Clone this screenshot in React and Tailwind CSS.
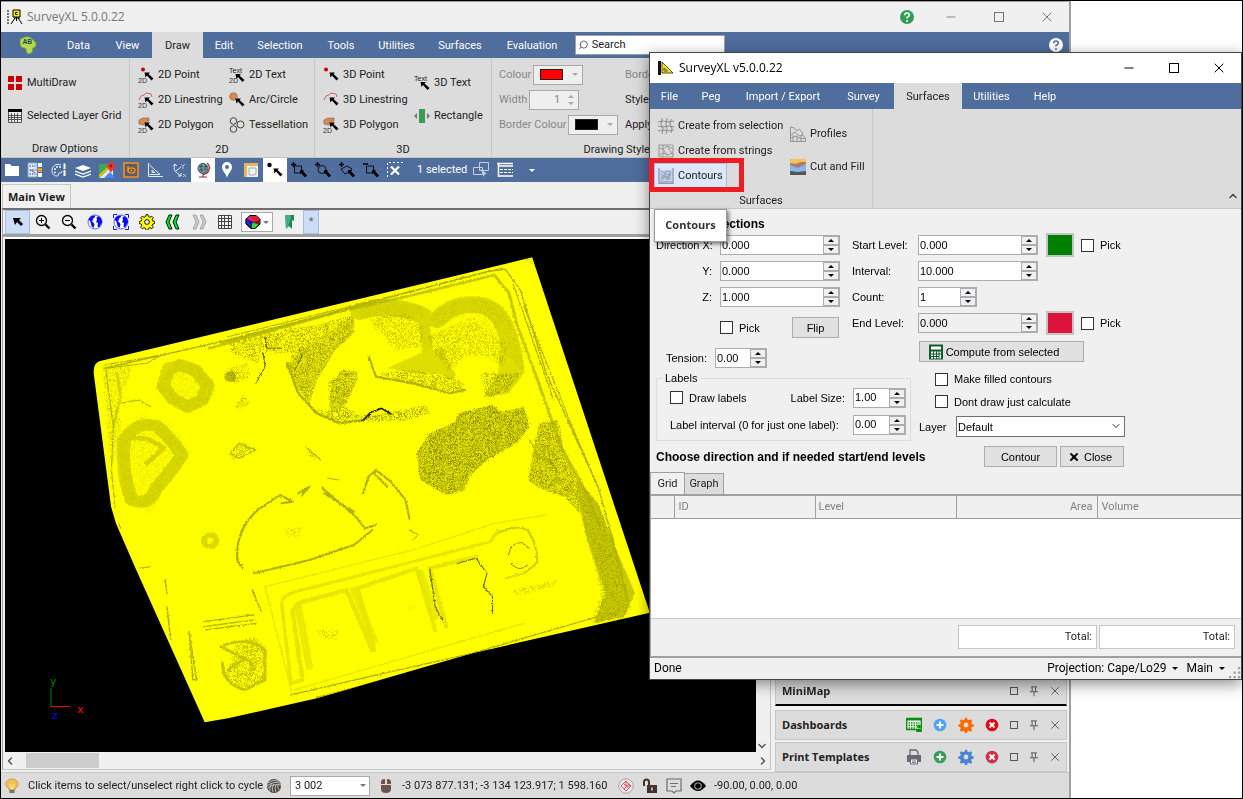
import React, { useState } from "react";
import clsx from "clsx";
import { Minus, X, Search, ChevronUp, ChevronDown } from "lucide-react";

const Icon = ({ children, className = "size-4" }) => (
  <svg viewBox="0 0 16 16" className={clsx("shrink-0", className)} fill="none">
    {children}
  </svg>
);

const Cursor = ({ x = 0, y = 0 }) => (
  <path
    transform={`translate(${x} ${y})`}
    d="M0 0h5.500l-1.500 1.500 5 4.500-2 2-4.500-5-1.500 2z"
    fill="#000"
  />
);

const Caret = ({ className = "text-[#777]" }) => (
  <svg viewBox="0 0 6 3" className={clsx("h-[3px] w-[6px] shrink-0", className)}>
    <path d="M0 0h6L3 3z" fill="currentColor" />
  </svg>
);

const Tag = ({ children, y = 15.5 }) => (
  <text x="0" y={y} fontSize="7" fill="#333" fontFamily="Liberation Sans, sans-serif">
    {children}
  </text>
);

/* ---------- ribbon icons ---------- */

const MultiDrawIcon = () => (
  <Icon>
    <path d="M1 1h6v6H1zM9 1h6v6H9zM1 9h6v6H1zM9 9h6v6H9z" fill="#cc0000" />
  </Icon>
);

const LayerGridIcon = () => (
  <Icon>
    <path d="M1 2h14v12.500H1z" fill="#eee" />
    <path d="M1.500 3v11.500h13V3M1 7.500h14M1 9.500h14M1 11.500h14M4.500 5v9M7.500 5v9M10.500 5v9" stroke="#333" strokeWidth=".8" />
    <path d="M1 1h14v3H1z" fill="#000" />
  </Icon>
);

const PointIcon = ({ flat }) => (
  <Icon>
    <circle cx={flat ? 5 : 3} cy="2.500" r="2" fill="#c40000" />
    {flat && <Tag>2D</Tag>}
    <Cursor x={6.5} y={5.500} />
  </Icon>
);

const LineIcon = ({ flat }) => (
  <Icon>
    <path d="M1 8l2-4 3-1 2-2 5 1 1 3" stroke="#c86464" />
    {flat && <Tag>2D</Tag>}
    <Cursor x={6.5} y={5.500} />
  </Icon>
);

const PolygonIcon = () => (
  <Icon>
    <path d="M1 3l4-2 6 0v3l-3 1-2 3-5-1z" fill="#d58a58" stroke="#8a5a38" strokeWidth=".6" />
    <Tag>2D</Tag>
    <Cursor x={6.5} y={5.500} />
  </Icon>
);

const TextIcon = ({ flat }) => (
  <Icon>
    <text x="0" y="5.500" fontSize="7" fill="#222" fontFamily="Liberation Sans, sans-serif">
      Text
    </text>
    {flat && <Tag>2D</Tag>}
    <Cursor x={6.5} y={7} />
  </Icon>
);

const CircleIcon = () => (
  <Icon>
    <circle cx="4.500" cy="4.500" r="3.800" fill="#d58a58" stroke="#a0683f" strokeWidth=".7" />
    <Cursor x={6.5} y={6.500} />
  </Icon>
);

const TessellationIcon = () => (
  <Icon>
    <g stroke="#444">
      <circle cx="4.500" cy="4" r="3.300" />
      <circle cx="11.500" cy="7.500" r="3.500" />
      <circle cx="4.500" cy="12" r="3.300" />
    </g>
  </Icon>
);

const RectangleIcon = () => (
  <Icon>
    <path d="M5 1h6v14H5z" fill="#3a9a58" />
    <path d="M3 5v6L0 8zM13 5v6l3-3z" fill="#777" />
  </Icon>
);

const MeshIcon = () => (
  <Icon>
    <path
      d="M0 4l5-1 5 1 6-1M0 8l5 1 6-1 5 1M0 13l6-1 4 1 6-1M4 0L3 6l2 5-1 5M9 0l-1 6 1 5-1 5M13 1l-1 5 2 5-1 4"
      stroke="#8c8c8c"
    />
  </Icon>
);

const StringsIcon = () => (
  <Icon>
    <path
      d="M1 2h14v12H1zM1 5l4 1 4-3 6 3M1 12l4-2 4 2 6-2M5 2v12M5 6l4 6M9 3l6 9"
      stroke="#999"
    />
  </Icon>
);

const ContoursIcon = () => (
  <Icon>
    <path d="M1 0v14h14V0" stroke="#8fa3c4" strokeWidth="1.500" />
    <path d="M2 2h12v11H2z" fill="#c3d0e6" />
    <path
      d="M3 3l3 2 3-2 4 1M3 6l3 2 2-2 5 2M3 9l3 1 3-2 4 3M4 12l3-4 3 4 2-8M3 12l5-8M8 12l5-7"
      stroke="#8696b5"
      strokeWidth=".8"
    />
    <path d="M0 15.500h16" stroke="#999" />
  </Icon>
);

const ProfilesIcon = () => (
  <Icon>
    <path d="M.5 15.500V1l4 1 2 3 3-2 3 4v2l3 3v3.500zM1 9l4-3 4 4 4-1M1 12l5-2 5 3 4-1M3 9v6M7 10v5M11 10v5" stroke="#949494" />
  </Icon>
);

const CutFillIcon = () => (
  <Icon>
    <path d="M0 0h16v16H0z" fill="#86b6ee" />
    <path d="M0 0h16v3L8 5 0 4z" fill="#f6c356" />
    <path d="M0 4l5 1 6-2 5 0v2L8 9 0 6z" fill="#b07c68" />
    <path d="M0 12l8 1 8-1v4H0z" fill="#555" />
  </Icon>
);

/* ---------- quick bar icons ---------- */

const FolderIcon = () => (
  <Icon>
    <path d="M1 2h5l1.500 2H15v10H1z" fill="#fff" />
  </Icon>
);

const CabinetIcon = () => (
  <Icon>
    <path d="M1 1h9v14H1z" fill="#dcebfa" stroke="#8aa" />
    <path d="M2.500 4h6M2.500 8h6M2.500 12h6" stroke="#4c7ac4" strokeWidth="1.500" strokeDasharray="1.500 1" />
    <path d="M11 1h4v4h-4zM11 11h4v4h-4z" fill="#f4f4f4" />
    <path d="M11 6h4v4h-4z" fill="#e9973c" />
    <path d="M4 8l4 3" stroke="#c33" />
  </Icon>
);

const PaletteIcon = () => (
  <Icon>
    <path d="M10 3C5 1 1 4 1 8.500S4 14 6 14s1-2 2-3 3 1 3-2" stroke="#fff" strokeWidth=".9" />
    <g fill="#fff">
      <circle cx="4" cy="7" r=".9" />
      <circle cx="6" cy="5" r=".9" />
      <circle cx="9" cy="5" r=".9" />
      <circle cx="4" cy="10.500" r=".9" />
      <path d="M13 1l1.500 1v5h-2V2zM12.500 8h2v6h-2z" />
    </g>
  </Icon>
);

const LayersIcon = () => (
  <Icon>
    <path d="M0 6l8-3 8 3-8 3z" fill="#fff" />
    <path d="M0 9l8 3 8-3M0 12l8 3 8-3" stroke="#fff" strokeWidth="1.300" />
  </Icon>
);

const MapsIcon = () => (
  <Icon>
    <path d="M0 2h14v14H0z" fill="#3aa757" />
    <path d="M0 16L14 3v13z" fill="#e8e8e8" />
    <path d="M5 16l6-6 5 6z" fill="#4285f4" />
    <path d="M0 14L11 4" stroke="#fbbc04" strokeWidth="2" />
    <path d="M12 0a4 4 0 0 0-4 4c0 3 3 4 4 7 1-3 4-4 4-7a4 4 0 0 0-4-4z" fill="#e53935" />
    <circle cx="12" cy="4" r="1.400" fill="#8a1b14" />
  </Icon>
);

const EyeTileIcon = () => (
  <Icon>
    <path d="M1 1h14v14H1z" fill="#5a5b66" stroke="#f79219" strokeWidth="1.600" />
    <path d="M5 4v6" stroke="#f79219" strokeWidth="1.500" />
    <ellipse cx="8.500" cy="8.500" rx="3.500" ry="2.600" stroke="#f79219" strokeWidth="1.300" />
    <circle cx="8.500" cy="8.500" r="1" fill="#f79219" />
  </Icon>
);

const SetSquareIcon = () => (
  <Icon>
    <path d="M1.500 1v13.500H16M2.500 3L13 12.500H2.500M5 8v2.500h3z" stroke="#e6ecf6" />
  </Icon>
);

const AxesIcon = () => (
  <Icon>
    <path d="M4 3Q2 8 5 10l5 4M5 9l5-4M2 4l2-2 2 2M7 14h3v-3" stroke="#e6ecf6" />
    <path d="M10 2l2 2 2-2M12 4v3M12 12l3 3M15 12l-3 3" stroke="#cfd9ea" strokeWidth=".8" />
  </Icon>
);

const GlobeStandIcon = () => (
  <Icon>
    <circle cx="8" cy="6.500" r="5" fill="#5b8fb5" stroke="#444" />
    <path d="M4 5l3-2 2 1 1 3-3 3-2-3zM10 3l2 1v3l-2 1z" fill="#33503f" />
    <path d="M3 6h10M8 2v9" stroke="#bcd4e6" strokeWidth=".6" />
    <path d="M12 1C16 4 15 12 8 12.500M8 12.500V15M4 15h8" stroke="#8f2f2f" strokeWidth="1.200" />
  </Icon>
);

const MarkerIcon = () => (
  <Icon>
    <path
      fillRule="evenodd"
      d="M8 0a5 5 0 0 0-5 5c0 4 4 6 5 11 1-5 5-7 5-11a5 5 0 0 0-5-5zm0 3a2 2 0 1 0 0 4 2 2 0 0 0 0-4z"
      fill="#fff"
    />
  </Icon>
);

const PlanIcon = () => (
  <Icon>
    <path d="M1 1h14v14H1z" fill="#f2f2f2" />
    <path d="M1 1h14v3H4v11H1z" fill="#e8b55d" />
    <path d="M6 6h7v6l-2 1H6z" stroke="#999" strokeWidth=".8" />
  </Icon>
);

const PointSelectIcon = () => (
  <Icon>
    <circle cx="2.500" cy="3" r="2.200" fill="#000" />
    <Cursor x={6.5} y={6.500} />
  </Icon>
);

const ShapeSelectIcon = ({ d, minus }) => (
  <Icon>
    <path d={d} stroke="#111" />
    <path d={minus ? "M0 2h5" : "M0 2.500h5M2.500 0v5"} stroke="#000" strokeWidth="1.400" />
    <path d="M9 8h4l-1 1 4 4.500-2 2L10 11l-1 1z" fill="#000" />
  </Icon>
);

const DeselectIcon = () => (
  <Icon>
    <path d="M.5 1v14M2 .5h14" stroke="#fff" strokeDasharray="2 2" />
    <path d="M4 4.500l8 8M12 4.500l-8 8" stroke="#fff" strokeWidth="2.200" />
  </Icon>
);

const CopyShapeIcon = () => (
  <Icon>
    <path d="M.5 5.500h9v7h-9zM6.500 .5h9v8h-9z" stroke="#c3cde0" />
    <path d="M8 7l6 5-2.500.5-1 2.500z" fill="#c3cde0" />
  </Icon>
);

const ListIcon = () => (
  <Icon>
    <path d="M0 1.500h16M1.500 1v14M1 4h15M1 14h15" stroke="#fff" strokeWidth="1.500" />
    <path d="M3 7.500h13M3 10.500h13" stroke="#fff" strokeDasharray="3 1" />
  </Icon>
);

const quickTools = [
  { name: "Cabinet", icon: <CabinetIcon /> },
  { name: "Palette", icon: <PaletteIcon /> },
  { name: "Layers", icon: <LayersIcon /> },
  { name: "Maps", icon: <MapsIcon /> },
  { name: "Imagery", icon: <EyeTileIcon /> },
  { name: "Set square", icon: <SetSquareIcon /> },
  { name: "Axes", icon: <AxesIcon /> },
  { name: "Globe", icon: <GlobeStandIcon />, on: true },
  { name: "Marker", icon: <MarkerIcon /> },
  { name: "Plan", icon: <PlanIcon /> },
  { name: "Point select", icon: <PointSelectIcon />, on: true },
  { name: "Box select", icon: <ShapeSelectIcon d="M3.500 4h7v7h-7z" /> },
  { name: "Circle select", icon: <ShapeSelectIcon d="M7 3.500a4 4 0 1 0 0 8 4 4 0 1 0 0-8z" /> },
  { name: "Polygon select", icon: <ShapeSelectIcon d="M2 7l6-3 5 3-3 3-4 2z" /> },
  { name: "Box deselect", icon: <ShapeSelectIcon d="M3.500 4h7v7h-7z" minus /> },
  { name: "Clear selection", icon: <DeselectIcon /> },
];

/* ---------- view toolbar icons ---------- */

const Magnifier = ({ plus }) => (
  <Icon>
    <circle cx="6.500" cy="6.500" r="5" stroke="#000" strokeWidth="1.300" />
    <path d="M4 6.500h5" stroke="#000" />
    {plus && <path d="M6.500 4v5" stroke="#000" />}
    <path d="M10.500 10.500l4 4" stroke="#000" strokeWidth="2.400" />
  </Icon>
);

const Globe = ({ framed }) => (
  <Icon>
    <circle cx="8" cy="8" r="7" fill="#fff" stroke="#3a3af0" strokeWidth=".8" />
    <path d="M1.500 5l3-3 4-.5-1 2-2 1.500 1 1-2 1 2 1.500 1 2-1 3.500-2-2-1-4zM9.500 4l1.500-2 3 2 1.200 4-1.700 3-1.500 2.500-1.500-1 .5-3.500-2-1 1-2z" fill="#0a0af0" />
    {framed && <path d="M.5 4V.5H4M12 .5h3.500V4M15.500 12v3.500H12M4 15.500H.5V12" stroke="#1414e6" />}
  </Icon>
);

const Gear = ({ fill = "#ffff00", stroke = "#000", hole = "#f0f0f0" }) => (
  <Icon>
    <path
      d="M7 .7h2l.5 2 1.500.6 1.800-1.100 1.500 1.500-1.100 1.800.6 1.500 2 .5v2l-2 .5-.6 1.500 1.100 1.800-1.500 1.500-1.800-1.100-1.500.6-.5 2H7l-.5-2-1.500-.6-1.800 1.100-1.500-1.500 1.100-1.800-.6-1.500-2-.5V7.500l2-.5.6-1.500L1.700 3.700l1.500-1.500L5 3.300l1.500-.6z"
      fill={fill}
      stroke={stroke}
      strokeWidth=".9"
    />
    <circle cx="8" cy="8" r="2.400" fill={hole} stroke={stroke} strokeWidth=".9" />
  </Icon>
);

const Rewind = () => (
  <Icon>
    <path d="M7 1H4L1 8l3 7h3L4 8zM14 1h-3L8 8l3 7h3l-3-7z" fill="#00ee22" stroke="#000" strokeWidth=".9" />
  </Icon>
);

const Forward = () => (
  <Icon>
    <path d="M2 1h3l3 7-3 7H2l3-7zM9 1h3l3 7-3 7H9l3-7z" fill="#ccc" stroke="#999" strokeWidth=".8" />
  </Icon>
);

const GridIcon = () => (
  <Icon>
    <path
      d="M1.500 1.500h13v13h-13zM4.500 1v14M7.500 1v14M11.500 1v14M1 4.500h14M1 7.500h14M1 11.500h14"
      stroke="#333"
      strokeWidth=".9"
    />
  </Icon>
);

const ColourCube = () => (
  <Icon>
    <path d="M1 5l4-3.500h6L15 5v5l-5 4.500H6L1 10z" fill="#d81b8c" stroke="#000" />
    <path d="M6 2h5l4 3-2 1H8z" fill="#e02020" />
    <path d="M1 5l6 3-1 6L1 10z" fill="#1a23cc" stroke="#000" strokeWidth=".6" />
    <path d="M7 8l7 2-4 4.500H6z" fill="#2fdc3e" stroke="#000" strokeWidth=".6" />
    <path d="M8 8l7-2v4z" fill="#8b1111" />
  </Icon>
);

const BookmarkIcon = () => (
  <Icon>
    <path d="M4 1h9v6l-2-1v9l-3-3-3 3z" fill="#138a55" />
    <path d="M4 1h6v3l-3 9-2 2z" fill="#7fccaa" opacity=".5" />
  </Icon>
);

/* ---------- status and dock icons ---------- */

const RoundIcon = ({ fill, d }) => (
  <Icon>
    <circle cx="8" cy="8" r="6.300" fill={fill} />
    <path d={d} stroke="#fff" strokeWidth="2" />
  </Icon>
);

const PLUS = "M8 4.500v7M4.500 8h7";
const CROSS = "M5.500 5.500l5 5M10.500 5.500l-5 5";

const DashboardIcon = () => (
  <Icon>
    <path d="M.7 1.500h14.600v11H.7z" stroke="#0a8f0a" strokeWidth="1.400" fill="#f4fbf4" />
    <path d="M0 2.500h16" stroke="#0a8f0a" strokeWidth="2" />
    <path d="M2.500 6h11M2.500 8.500h9M2.500 11h8" stroke="#0a8f0a" strokeDasharray="1.500 1" strokeWidth="1.500" />
    <circle cx="13" cy="9.500" r="2" fill="#0a8f0a" />
    <path d="M10 15c0-4 6-4 6 0z" fill="#0a8f0a" />
  </Icon>
);

const PrinterIcon = () => (
  <Icon>
    <path d="M4 6V1h6l2 2v3" stroke="#666a73" strokeWidth="1.300" />
    <path d="M1 6h14v7h-3v-3H4v3H1z" fill="#666a73" />
    <path d="M4.500 10h7v5h-7z" fill="#eee" stroke="#666a73" />
    <path d="M6 12h4M6 13.500h4" stroke="#666a73" strokeWidth=".8" />
  </Icon>
);

const PinIcon = () => (
  <Icon className="size-3">
    <path d="M4 2.500h8M5.500 3v5.500M10 3v5.500M2.500 9h11M8 9v6" stroke="#555" strokeWidth="1.300" />
  </Icon>
);

const BulbIcon = () => (
  <Icon>
    <path d="M8 1C4.500 1 2 3 2 6s3 4 3 6h6c0-2 3-3 3-6s-2.500-5-6-5z" fill="#f5c04f" stroke="#b98a3c" strokeWidth=".7" />
    <path d="M6 6l2 5 2-5" stroke="#fff3b0" />
    <path d="M5.500 12h5v3h-5z" fill="#6a7380" />
  </Icon>
);

const BallIcon = () => (
  <Icon>
    <circle cx="8" cy="8" r="7" fill="#4a4541" />
    <path d="M2 5q5-4 11-2M1 8q6-5 13-3M2 10q6-5 13-3M4 13Q3 8 6 5M7 14Q5 10 8 6M10 14q-2-4 0-7M13 12q-2-2-1-5" stroke="#cfc9c3" strokeWidth=".9" />
  </Icon>
);

const MouseIcon = () => (
  <Icon>
    <path d="M3 6V4q0-3 4-3v5zM9 1q4 0 4 3v2H9zM3 7h10v4q0 4-5 4t-5-4z" fill="#6b5549" />
  </Icon>
);

const SnapIcon = () => (
  <Icon>
    <circle cx="8" cy="8" r="7.300" fill="#e9e4e4" stroke="#999" strokeWidth=".8" />
    <path d="M8 3l5 5-5 5-5-5zM5 5l6 6M11 6l-5 5M8 3v5h5" stroke="#d84a52" strokeWidth=".9" />
  </Icon>
);

const UnlockIcon = () => (
  <Icon>
    <path d="M2 8V4q0-2.500 2.500-2.500T7 4v3" stroke="#43342b" strokeWidth="2" />
    <path d="M5 7h10v8H5z" fill="#43342b" />
    <path d="M10 9.500v3" stroke="#ddd" strokeWidth="1.500" />
  </Icon>
);

const NoteIcon = () => (
  <Icon>
    <path d="M1 1h14v12h-5l-2 2-2-2H1z" stroke="#6f6f6f" strokeWidth="1.200" />
    <path d="M4 5.500h8M5 8.500h5" stroke="#6f6f6f" strokeWidth="1.200" />
  </Icon>
);

const EyeIcon = () => (
  <Icon>
    <path d="M0 8q8-11 16 0q-8 10-16 0z" fill="#000" />
    <circle cx="8" cy="8" r="3.600" fill="#dcdcdc" />
    <circle cx="8" cy="8" r="2.800" fill="#000" />
  </Icon>
);

const HelpDot = ({ fill, ink }) => (
  <Icon>
    <circle cx="8" cy="8" r="7" fill={fill} />
    <path d="M5.700 6.200q0-2.200 2.300-2.200t2.300 2q0 1.500-2.300 2.500v1" stroke={ink} strokeWidth="1.600" />
    <circle cx="8" cy="12" r="1" fill={ink} />
  </Icon>
);

const CalculatorIcon = () => (
  <Icon>
    <path d="M1 .5h14v15H1z" fill="#0f5b2c" />
    <path d="M3 2.500h10v3H3z" fill="#fff" />
    <path d="M3 7.500h2v2H3zM6 7.500h2v2H6zM9 7.500h1.500v2H9zM11.500 7.500H13v2h-1.500zM3 10.500h2v1.500H3zM6 10.500h2v1.500H6zM9 10.500h1.500v1.500H9zM3 13h2v1.500H3zM6 13h2v1.500H6zM9 13h1.500v1.500H9zM11.500 10.500H13v4h-1.500z" fill="#fff" />
  </Icon>
);

/* ---------- ribbon building blocks ---------- */

const TabBar = ({ tabs, active }) => (
  <>
    {tabs.map(([name, width]) => (
      <button
        key={name}
        className={clsx(
          "h-full shrink-0 pt-px text-center",
          width,
          name === active ? "bg-[#dcdcdc] text-[#222]" : "text-white"
        )}
      >
        {name}
      </button>
    ))}
  </>
);

const RibbonButton = ({ icon, children, tall, className }) => (
  <button
    className={clsx(
      "flex items-center gap-1 whitespace-nowrap text-left",
      tall ? "h-[33px]" : "h-[25px]",
      className
    )}
  >
    {icon}
    {children}
  </button>
);

const RibbonGroup = ({ title, className, children }) => (
  <section className={clsx("flex shrink-0 flex-col border-r border-[#c6c6c6] pt-1", className)}>
    <div className="flex h-[75px] items-center">{children}</div>
    <h2 className="mt-[5px] text-center leading-4">{title}</h2>
  </section>
);

const ColourCombo = ({ swatch, label }) => (
  <button
    aria-label={label}
    className="flex h-5 w-[50px] shrink-0 items-center justify-between border border-[#a8a8a8] bg-[#efefef] pr-1 pl-[6px]"
  >
    <span className={clsx("h-[11px] w-[23px] border border-[#222]", swatch)} />
    <Caret className="text-[#aaa]" />
  </button>
);

/* ---------- terrain ---------- */

const OUTLINE =
  "M52 364L1222 52 1540 1118 1060 1240 640 1375 400 1435 337 1447 150 985 97 850 84 800 37 400Q36 370 52 364z";

const Terrain = () => (
  <svg viewBox="0 0 751 513" className="block h-[513px] w-[751px] max-w-none">
    <defs>
      <clipPath id="edge">
        <path d={OUTLINE} />
      </clipPath>
      <filter id="rough" x="-5%" y="-5%" width="110%" height="110%">
        <feTurbulence type="fractalNoise" baseFrequency="0.180" numOctaves="2" seed="4" result="n" />
        <feDisplacementMap in="SourceGraphic" in2="n" scale="8" xChannelSelector="R" yChannelSelector="G" />
      </filter>
      <filter id="grain" x="0" y="0" width="100%" height="100%">
        <feTurbulence type="fractalNoise" baseFrequency="0.350" numOctaves="3" seed="9" result="n" />
        <feColorMatrix in="n" type="matrix" values="0 0 0 0 0  0 0 0 0 0  0 0 0 0 0  5 0 0 0 -2.200" result="m" />
        <feComposite in="SourceGraphic" in2="m" operator="in" result="g" />
        <feDisplacementMap in="g" in2="n" scale="14" xChannelSelector="R" yChannelSelector="G" />
      </filter>
    </defs>
    <g transform="translate(75 1) scale(.370 .3333)" strokeLinejoin="round" strokeLinecap="round">
      <path d={OUTLINE} fill="#ffff00" />
      <g clipPath="url(#edge)">
        {/* flat tinted areas */}
        <g filter="url(#rough)">
          <g stroke="#dada00" fill="none">
            <path d="M270 375L310 390 345 435 330 480 290 500 250 475 225 440 240 385 270 378z" strokeWidth="36" />
            <path d="M120 600Q150 540 210 560Q250 600 275 645Q250 690 205 745Q190 800 140 780Q110 700 120 600z" strokeWidth="36" />
            <path d="M150 595Q190 590 225 625L180 670" strokeWidth="14" />
            <circle cx="352" cy="902" r="17" strokeWidth="16" />
            <circle cx="406" cy="410" r="9" strokeWidth="14" stroke="#b9b900" />
            <path d="M755 215Q830 185 925 225M965 240Q1010 185 1080 195T1170 350" strokeWidth="50" />
            <path d="M930 240L940 340 1000 405" strokeWidth="30" />
          </g>
          <g fill="#dede00">
            <path d="M830 385L920 340 980 320 1010 405 900 398z" />
            <path d="M1140 240Q1200 290 1200 400L1160 460 1090 470 1130 400z" />
            <path d="M1330 700L1400 790 1450 930 1500 1060 1470 1130 1390 1150 1420 1060 1370 900z" fill="#caca00" />
            <path d="M945 580L1015 545 1025 520 1110 495 1140 515 1200 500 1215 560 1180 610 1100 660 1050 710 1040 750 990 765 920 720 910 640z" />
            <path d="M560 380L590 340 740 225 740 280 690 330 640 420 620 490 580 430zM680 430L710 390 750 395 745 430 715 500 670 530z" fill="#e6e600" />
            <path d="M1240 550L1290 540 1310 640 1340 700 1350 820 1310 770 1240 745 1210 720z" fill="#e6e600" />
          </g>
        </g>

        {/* speckled rubble */}
        <g fill="#7a7a00" filter="url(#grain)">
          <path d="M945 580L1015 545 1025 520 1110 495 1140 515 1200 500 1215 560 1180 610 1100 660 1050 710 1040 750 990 765 920 720 910 640z" opacity=".8" />
          <path d="M400 310L500 275 640 255 740 225 740 280 690 330 640 420 620 490 580 430 555 380 580 340 500 340 480 370 440 350 410 340z" opacity=".6" />
          <path d="M620 500L680 520 670 430 710 390 750 395 745 430 715 500 760 530 940 495 945 520 880 540 760 545 700 550 640 525z" opacity=".7" />
          <path d="M780 235L880 220 930 260 920 320 850 330 820 290zM940 290L1060 230 1150 320 1145 380 1100 350 1040 345 1000 400 960 340z" opacity=".4" />
          <path d="M755 205Q830 165 930 205L930 235 760 235zM950 220Q1080 130 1150 220L1200 330 1200 400 1160 350 1060 220 960 260z" opacity=".15" />
          <path d="M810 400L900 390 1000 410 1040 430 1030 460 960 445 880 430zM1085 400L1190 400 1150 460 1100 475 1090 440z" opacity=".6" />
          <path d="M1240 550L1290 540 1310 640 1340 700 1350 820 1310 770 1240 745 1210 720z" opacity=".7" />
          <path d="M1330 700L1400 790 1450 930 1490 1100 1470 1140 1380 1150 1410 1060 1370 890z" opacity=".4" />
          <path d="M400 1290L420 1210 470 1190 500 1220 500 1320 440 1350 390 1310z" opacity=".5" />
          <path d="M60 380L140 375 130 420 100 480 110 560 85 700z" opacity=".3" />
          <path d="M390 390L450 370 460 410 420 430zM420 500L440 465 460 490 430 510zM405 650L430 605 475 625 420 660zM615 620L650 660 620 650z" opacity=".5" />
          <path d="M205 440L260 355 330 385 372 440 340 500 290 520 235 490zM100 600L160 525 240 545 300 640 220 760 190 820 120 790z" opacity=".14" />
          <path d="M550 870L600 860 590 890 560 885zM640 1170L700 1170 690 1200 650 1190zM1170 1050L1290 1020 1280 1040 1180 1065zM885 1095L915 1100 890 1110zM1200 60L1222 52 1226 75z" opacity=".35" />
        </g>

        {/* break lines */}
        <g stroke="#b0b000" strokeWidth="3" fill="none" filter="url(#rough)">
          <path d="M65 385L400 300 1100 95 1150 88 1190 150 1260 400 1400 740 1440 900 1480 1080" strokeWidth="4" />
          <path d="M350 325L700 215 900 165 1120 105 1160 160 1180 250 1240 430 1300 620 1370 760 1400 850" strokeWidth="8" opacity=".7" />
          <path d="M400 290L800 180 1140 85M380 310L750 200M1200 200L1330 560 1400 740M1170 130L1280 480" />
          <path d="M70 390L90 560 85 690 95 800M110 490L160 480 190 500M65 375L220 345 180 370 70 385" />
          <path d="M100 400L110 470 90 560" strokeWidth="7" opacity=".5" />
          <path d="M425 960Q420 870 480 810L540 765 575 785 545 790M425 960L440 985M470 1000L620 960 740 915 790 870M655 745L745 830 770 865 800 855M660 760L740 815M590 760L620 740 600 765" strokeWidth="6" />
          <path d="M765 760L780 710 800 690 840 725 880 780 890 835M795 700L830 740" strokeWidth="6" />
          <path d="M560 370L590 460 640 520 700 550 765 540" strokeWidth="7" />
          <path d="M780 350L800 410 900 430 1000 460 1040 450" strokeWidth="6" />
          <path d="M1115 890Q1165 850 1210 870 1240 920 1235 970L1200 1000 1150 1015" strokeWidth="6" stroke="#cccc00" />
          <path d="M335 1145L470 1125M340 1170L475 1150M335 1160L470 1140M295 1175L315 1320 305 1320zM230 1020L235 1060M235 1100L245 1200M465 1050L490 1115" strokeWidth="4" />
          <path d="M390 1215Q460 1190 500 1230L500 1320 445 1350Q385 1330 385 1270M380 1220L460 1265 470 1290M400 1290L440 1260" strokeWidth="8" stroke="#c4c400" />
          <path d="M570 1365L820 1300 1060 1240 1290 1165 1400 1130" strokeWidth="4" />
          <path d="M640 1372L860 1310 1080 1245 1300 1190" strokeWidth="4" />
          <path d="M1215 600L1240 650 1250 740M1250 650L1290 690 1280 730M160 985L190 980M105 850L110 865" />
          <path d="M430 610L475 630 430 655 405 640zM610 620L650 660M670 715L700 720M890 870L915 885 900 900" />
        </g>

        {/* cells at the lower edge */}
        <g stroke="#e6e600" fill="none" filter="url(#rough)">
          <path d="M570 1330L545 1090Q545 1060 620 1045L900 965 1110 905 1130 870" strokeWidth="9" />
          <path d="M600 1310L575 1120Q575 1090 620 1080L720 1050 790 1230M570 1330L600 1320M750 1045L795 1230M750 1045L910 985 960 1170M945 985L990 1160M945 985L1070 950" strokeWidth="12" />
          <path d="M590 1100L620 1280M740 1050L795 1200M920 1000L960 1130" strokeWidth="20" opacity=".8" />
          <path d="M575 1370L500 1040L900 930 1120 850 1260 825M580 1350L1200 1150M1150 1015L1200 1000" strokeWidth="4" />
        </g>

        {/* sharp edges */}
        <g stroke="#666600" strokeWidth="3" fill="none" filter="url(#rough)">
          <path d="M765 542L785 518 815 505 840 522" strokeWidth="5" stroke="#222200" />
          <path d="M590 320L600 350 580 390M500 290L505 325 545 325M495 340L500 380 475 430" />
          <path d="M1020 970L1070 955 1100 1000 1090 1040 1115 1070 1115 1120M945 985L960 1100 980 1140" />
          <path d="M1158 945Q1165 905 1195 908L1215 925M1265 655L1290 690M1165 970Q1185 1000 1210 975" strokeWidth="2" />
        </g>
      </g>
    </g>

    {/* axis tripod */}
    <g transform="translate(46 436)" fontSize="11" fontFamily="DejaVu Sans, sans-serif">
      <path d="M0 13v19" stroke="#008000" />
      <path d="M0 31.500h19" stroke="#ff0000" />
      <text x="-1" y="10" fill="#008000">y</text>
      <text x="26" y="38" fill="#ff0000">x</text>
      <text x="1" y="44" fill="#0000ff">z</text>
    </g>
  </svg>
);

/* ---------- main window ---------- */

const MAIN_TABS = [
  ["Data", "w-[49px]"],
  ["View", "w-[49px]"],
  ["Draw", "w-[51px]"],
  ["Edit", "w-[42px]"],
  ["Selection", "w-[70px]"],
  ["Tools", "w-[52px]"],
  ["Utilities", "w-[59px]"],
  ["Surfaces", "w-[68px]"],
  ["Evaluation", "w-[76px]"],
];

const MainRibbon = () => (
  <div className="flex h-[100px] overflow-hidden border-b border-[#c6c6c6] bg-[#dcdcdc] text-[#222]">
    <RibbonGroup title="Draw Options" className="w-[129px]">
      <div className="pl-[6px]">
        <RibbonButton tall icon={<MultiDrawIcon />}>MultiDraw</RibbonButton>
        <RibbonButton tall icon={<LayerGridIcon />}>Selected Layer Grid</RibbonButton>
      </div>
    </RibbonGroup>
    <RibbonGroup title="2D" className="w-[185px]">
      <div className="w-[99px] pl-2">
        <RibbonButton icon={<PointIcon flat />}>2D Point</RibbonButton>
        <RibbonButton icon={<LineIcon flat />}>2D Linestring</RibbonButton>
        <RibbonButton icon={<PolygonIcon />}>2D Polygon</RibbonButton>
      </div>
      <div>
        <RibbonButton icon={<TextIcon flat />}>2D Text</RibbonButton>
        <RibbonButton icon={<CircleIcon />}>Arc/Circle</RibbonButton>
        <RibbonButton icon={<TessellationIcon />}>Tessellation</RibbonButton>
      </div>
    </RibbonGroup>
    <RibbonGroup title="3D" className="w-[177px]">
      <div className="w-[99px] pl-2">
        <RibbonButton icon={<PointIcon />}>3D Point</RibbonButton>
        <RibbonButton icon={<LineIcon />}>3D Linestring</RibbonButton>
        <RibbonButton icon={<PolygonIcon />}>3D Polygon</RibbonButton>
      </div>
      <div>
        <RibbonButton tall icon={<TextIcon />}>3D Text</RibbonButton>
        <RibbonButton tall icon={<RectangleIcon />}>Rectangle</RibbonButton>
      </div>
    </RibbonGroup>
    <RibbonGroup title="Drawing Styles" className="w-[256px]">
      <div className="w-[133px] pl-[7px] text-[#888]">
        <div className="flex h-[25px] items-center gap-[2px]">
          <span>Colour</span>
          <ColourCombo label="Colour" swatch="bg-[#ff0000]" />
        </div>
        <div className="flex h-[25px] items-center gap-[2px]">
          <label htmlFor="pen-width">Width</label>
          <div className="flex h-5 w-[50px] items-center border border-[#a8a8a8] bg-[#efefef] pr-1">
            <input id="pen-width" defaultValue="1" className="w-[30px] min-w-0 text-right" />
            <span className="ml-auto flex flex-col gap-1 text-[#aaa]">
              <Caret className="rotate-180" />
              <Caret className="rotate-0" />
            </span>
          </div>
        </div>
        <div className="flex h-[25px] items-center gap-[2px] whitespace-nowrap">
          <span>Border Colour</span>
          <ColourCombo label="Border colour" swatch="bg-black" />
        </div>
      </div>
      <div className="whitespace-nowrap leading-[25px]">
        <p className="text-[#888]">Border</p>
        <p>Style</p>
        <p>Apply</p>
      </div>
    </RibbonGroup>
  </div>
);

const QuickBar = () => (
  <div className="flex h-6 items-center bg-[#4f6d9d] text-white">
    <button aria-label="Open" className="flex h-6 w-[22px] items-center justify-center">
      <FolderIcon />
    </button>
    {quickTools.map((t) => (
      <button
        key={t.name}
        aria-label={t.name}
        className={clsx("flex size-6 items-center justify-center", t.on && "bg-white")}
      >
        {t.icon}
      </button>
    ))}
    <span className="mr-2 ml-[10px] w-[48px] whitespace-nowrap">1 selected</span>
    <button aria-label="Copy shapes" className="mr-2">
      <CopyShapeIcon />
    </button>
    <button aria-label="List">
      <ListIcon />
    </button>
    <button aria-label="More" className="ml-4">
      <Caret className="text-white" />
    </button>
  </div>
);

const viewTools = [
  { name: "Zoom in", icon: <Magnifier plus /> },
  { name: "Zoom out", icon: <Magnifier /> },
  { name: "World", icon: <Globe /> },
  { name: "World extents", icon: <Globe framed /> },
  { name: "Settings", icon: <Gear /> },
  { name: "Previous view", icon: <Rewind /> },
  { name: "Next view", icon: <Forward /> },
  { name: "Grid", icon: <GridIcon /> },
];

const MainView = () => (
  <div className="flex min-w-0 flex-1 flex-col pl-px">
    <div className="flex h-[26px] items-end">
      <button className="h-6 border border-b-0 border-[#c6c6c6] bg-[#f0f0f0] px-[5px] font-['Open_Sans',sans-serif] font-bold text-[#222]">
        Main View
      </button>
    </div>
    <div className="flex flex-1 flex-col border-t-2 border-r border-b border-l border-t-[#6f6f6f] border-r-[#c6c6c6] border-b-[#c6c6c6] border-l-[#a0a0a0]">
      <div className="flex h-[27px] items-center border-b-3 border-[#a0a0a0] pl-[2px]">
        <button aria-label="Select" className="flex h-6 w-[25px] items-center justify-center border border-[#a9bde0] bg-[#cddcf7]">
          <Icon>
            <path d="M3 4h8L9 6l4 4-2 2-4-4-2 3z" fill="#000" />
          </Icon>
        </button>
        {viewTools.map((t) => (
          <button key={t.name} aria-label={t.name} className="flex h-6 w-[26px] items-center justify-center">
            {t.icon}
          </button>
        ))}
        <button aria-label="Render mode" className="mr-2 ml-[3px] flex h-5 w-8 items-center justify-between border border-[#a8a8a8] bg-white px-[3px]">
          <ColourCube />
          <Caret />
        </button>
        <BookmarkIcon />
        <button className="ml-[6px] h-6 w-4 border border-[#a9bde0] bg-[#cddcf7] text-[#666]">*</button>
      </div>
      <div className="flex flex-1 border-t-2 border-white pl-[2px]">
        <div className="min-w-0 flex-1 overflow-hidden bg-black">
          <Terrain />
        </div>
        <div className="flex w-[14px] flex-col justify-end text-[#555]">
          <ChevronDown className="mr-auto size-3" strokeWidth={3} />
        </div>
      </div>
      <div className="flex h-[17px] items-center bg-[#f0f0f0] px-px text-[#555]">
        <ChevronUp className="size-3 -rotate-90" strokeWidth={3} />
        <span className="ml-[10px] h-[15px] w-[73px] bg-[#cdcdcd]" />
        <ChevronDown className="ml-auto size-3 -rotate-90" strokeWidth={3} />
      </div>
    </div>
    <div className="h-[2px]" />
  </div>
);

const DockPanel = ({ title, tools, className }) => (
  <section
    className={clsx(
      "flex h-[30px] items-center border border-[#c6c6c6] bg-[#dcdcdc] pr-1 pl-[6px] text-[#222]",
      className
    )}
  >
    <h2 className="mr-auto font-['Open_Sans',sans-serif] font-bold">{title}</h2>
    {tools && <div className="flex w-[94px] items-center justify-between">{tools}</div>}
    <div className="ml-2 flex items-center gap-2 text-[#555]">
      <span className="flex size-3 items-center justify-center">
        <span className="size-[8px] border border-[#555]" />
      </span>
      <PinIcon />
      <X className="size-[14px]" strokeWidth={1.5} />
    </div>
  </section>
);

const Dock = () => (
  <aside className="mr-[2px] ml-1 flex w-[292px] flex-col justify-end">
    <DockPanel title="MiniMap" className="border-b-2 border-b-black" />
    <DockPanel
      title="Dashboards"
      className="mt-1"
      tools={
        <>
          <DashboardIcon />
          <RoundIcon fill="#4da3f7" d={PLUS} />
          <Gear fill="#ff6a00" stroke="none" hole="#dcdcdc" />
          <RoundIcon fill="#e30613" d={CROSS} />
        </>
      }
    />
    <DockPanel
      title="Print Templates"
      className="mt-[2px]"
      tools={
        <>
          <PrinterIcon />
          <RoundIcon fill="#3a9a58" d={PLUS} />
          <Gear fill="#4a86cf" stroke="none" hole="#dcdcdc" />
          <RoundIcon fill="#d02f45" d={CROSS} />
        </>
      }
    />
  </aside>
);

const MainStatus = () => (
  <footer className="flex h-[26px] items-center gap-2 border-t border-[#c6c6c6] bg-[#dcdcdc] pl-[3px] whitespace-nowrap text-[#222]">
    <BulbIcon />
    <div className="flex w-[254px] items-center justify-between">
      <span>Click items to select/unselect right click to cycle</span>
      <BallIcon />
    </div>
    <div className="relative h-5 w-20">
      <select
        aria-label="Scale"
        className="h-full w-full appearance-none border border-[#a8a8a8] bg-white pl-1"
        defaultValue="3 002"
      >
        <option>3 002</option>
      </select>
      <span className="pointer-events-none absolute top-2 right-1 flex">
        <Caret />
      </span>
    </div>
    <MouseIcon />
    <span className="w-[208px]">-3 073 877.131; -3 134 123.917; 1 598.160</span>
    <SnapIcon />
    <UnlockIcon />
    <NoteIcon />
    <EyeIcon />
    <span>-90.00, 0.00, 0.00</span>
  </footer>
);

const MainWindow = () => (
  <div className="mr-[171px] flex min-w-0 flex-1 flex-col border-t border-r-2 border-[#a0a0a0] bg-[#f0f0f0]">
    <header className="flex h-[30px] items-center pl-[6px] text-[#777]">
      <Icon>
        <path d="M1 1v14" stroke="#000" strokeDasharray="2 1" />
        <path d="M6 1h7v7H6z" fill="#ffee00" stroke="#000" />
        <path d="M10.500 3.500h-2v2h2M7 9h6M9.500 8v4M8 9l-4 6M11 9l4 6" stroke="#000" />
      </Icon>
      <h1 className="ml-1 font-['Open_Sans',sans-serif] text-[12px]">SurveyXL 5.0.0.22</h1>
      <div className="mr-[14px] ml-auto">
        <HelpDot fill="#2f9d53" ink="#fff" />
      </div>
      <div className="flex items-center gap-1">
        <button aria-label="Minimise" className="flex w-11 justify-center">
          <Minus className="size-[14px]" strokeWidth={1.5} />
        </button>
        <button aria-label="Maximise" className="flex w-11 justify-center">
          <span className="size-[10px] border border-[#777]" />
        </button>
        <button aria-label="Close window" className="flex w-11 justify-center">
          <X className="size-4" strokeWidth={1.5} />
        </button>
      </div>
    </header>
    <nav className="flex h-[26px] items-center bg-[#4f6d9d]">
      <button aria-label="Application menu" className="flex w-[53px] justify-center">
        <Icon className="size-[18px]">
          <path d="M1 3q6-4 10-1l4 4v3l-3 2v3l-3 2-2-1-1-4-4-1-1-3z" fill="#b3d94c" stroke="#7aa62c" strokeWidth=".6" />
          <text x="3" y="7.500" fontSize="6" fontWeight="bold" fill="#164a64" fontFamily="Liberation Sans, sans-serif">
            AB
          </text>
        </Icon>
      </button>
      <TabBar tabs={MAIN_TABS} active="Draw" />
      <div className="ml-[5px] flex h-5 w-[150px] items-center border border-[#a0a0a0] bg-white text-[#222]">
        <Search className="ml-[2px] size-3 -scale-x-100 text-[#555]" />
        <input aria-label="Search" placeholder="Search" className="ml-[3px] w-full min-w-0 placeholder:text-[#222]" />
      </div>
      <div className="mr-[5px] ml-auto">
        <HelpDot fill="#fff" ink="#4f6d9d" />
      </div>
    </nav>
    <MainRibbon />
    <QuickBar />
    <div className="flex flex-1">
      <MainView />
      <Dock />
    </div>
    <MainStatus />
  </div>
);

/* ---------- contour dialog ---------- */

const DIALOG_TABS = [
  ["File", "w-[39px]"],
  ["Peg", "w-[44px]"],
  ["Import / Export", "w-[100px]"],
  ["Survey", "w-[61px]"],
  ["Surfaces", "w-[68px]"],
  ["Utilities", "w-[59px]"],
  ["Help", "w-[48px]"],
];

const Spinner = ({ id, value, step = 1, digits = 3, width = "w-[120px]", muted }) => {
  const [val, setVal] = useState(value);
  return (
    <div className={clsx("flex h-5 border border-[#ababb0]", width, muted ? "bg-[#f0f0f0]" : "bg-white")}>
      <input
        id={id}
        value={val.toFixed(digits)}
        onChange={(e) => setVal(Number(e.target.value) || 0)}
        className="h-[17px] w-full min-w-0 pl-px text-[11px]"
      />
      <div className="flex w-4 shrink-0 flex-col bg-[#f0f0f0]">
        {[step, -step].map((d) => (
          <button
            key={d}
            type="button"
            aria-label={d > 0 ? "Increase" : "Decrease"}
            onClick={() => setVal(val + d)}
            className="flex flex-1 items-center justify-center border border-[#ababb0] text-black"
          >
            <Caret className={d > 0 ? "rotate-180" : "rotate-0"} />
          </button>
        ))}
      </div>
    </div>
  );
};

const Check = ({ children }) => (
  <label className="flex items-center gap-[6px] whitespace-nowrap">
    <input type="checkbox" className="size-[13px] appearance-none border border-[#333] bg-white checked:bg-[#4f6d9d]" />
    {children}
  </label>
);

const FormButton = ({ children, className }) => (
  <button
    type="button"
    className={clsx("flex h-[21px] items-center justify-center border border-[#adadad] bg-[#e1e1e1]", className)}
  >
    {children}
  </button>
);

const Swatch = ({ colour, label }) => (
  <button type="button" aria-label={label} className={clsx("mr-[7px] ml-2 h-6 w-7 border-2 border-[#c4c4c4]", colour)} />
);

const LevelRow = ({ id, label, children }) => (
  <div className="flex h-[26px] items-center">
    <label htmlFor={id} className="w-[66px] whitespace-nowrap">{label}</label>
    {children}
  </div>
);

const ContourForm = () => (
  <form
    onSubmit={(e) => e.preventDefault()}
    className="pt-[7px] pl-[6px] font-['Liberation_Sans',sans-serif] text-[11px] text-black"
  >
    <h2 className="h-4 text-[12px] leading-4 font-bold">Contour Directions</h2>
    <div className="flex">
      <div className="w-[196px] shrink-0 pt-[3px]">
        <div className="grid grid-cols-[56px_120px] items-center gap-x-2 gap-y-[6px] text-right">
          <label htmlFor="dir-x" className="whitespace-nowrap">Direction X:</label>
          <Spinner id="dir-x" value={0} />
          <label htmlFor="dir-y">Y:</label>
          <Spinner id="dir-y" value={0} />
          <label htmlFor="dir-z">Z:</label>
          <Spinner id="dir-z" value={1} />
        </div>
        <div className="mt-[10px] flex w-[183px] items-center justify-between pl-16">
          <Check>Pick</Check>
          <FormButton className="w-[47px]">Flip</FormButton>
        </div>
        <div className="mt-[10px] flex items-center gap-2 pl-[10px]">
          <label htmlFor="tension">Tension:</label>
          <Spinner id="tension" value={0} digits={2} width="w-[52px]" />
        </div>
      </div>
      <div className="flex-1">
        <LevelRow id="start" label="Start Level:">
          <Spinner id="start" value={0} />
          <Swatch label="Start colour" colour="bg-[#008000]" />
          <Check>Pick</Check>
        </LevelRow>
        <LevelRow id="interval" label="Interval:">
          <Spinner id="interval" value={10} />
        </LevelRow>
        <LevelRow id="count" label="Count:">
          <Spinner id="count" value={1} digits={0} width="w-[59px]" />
        </LevelRow>
        <LevelRow id="end" label="End Level:">
          <Spinner id="end" value={0} muted />
          <Swatch label="End colour" colour="bg-[#dc143c]" />
          <Check>Pick</Check>
        </LevelRow>
        <FormButton className="mt-[5px] ml-[67px] w-[165px] gap-[2px] pr-4">
          <CalculatorIcon />
          Compute from selected
        </FormButton>
      </div>
    </div>

    <div className="flex items-start">
      <fieldset className="mt-1 w-[255px] border border-[#dcdcdc] pr-1 pb-[2px] pl-[13px]">
        <legend className="-ml-2 px-[3px] leading-3">Labels</legend>
        <div className="flex h-[27px] items-center">
          <Check>Draw labels</Check>
          <label htmlFor="label-size" className="mr-2 ml-auto">Label Size:</label>
          <Spinner id="label-size" value={1} digits={2} width="w-[53px]" />
        </div>
        <div className="flex h-[27px] items-center">
          <label htmlFor="label-interval" className="mr-auto">Label interval (0 for just one label):</label>
          <Spinner id="label-interval" value={0} digits={2} width="w-[53px]" />
        </div>
      </fieldset>
      <div className="pl-2">
        <div className="flex h-[22px] items-center pl-4">
          <Check>Make filled contours</Check>
        </div>
        <div className="flex h-[23px] items-center pl-4">
          <Check>Dont draw just calculate</Check>
        </div>
        <div className="mt-[3px] flex items-center">
          <label htmlFor="layer" className="w-[37px]">Layer</label>
          <div className="relative">
            <select
              id="layer"
              defaultValue="Default"
              className="h-[21px] w-[169px] appearance-none border border-[#707070] bg-white pl-px"
            >
              <option>Default</option>
            </select>
            <ChevronDown className="pointer-events-none absolute top-1 right-[3px] size-3 text-[#333]" />
          </div>
        </div>
      </div>
    </div>

    <div className="mt-[5px] flex items-center">
      <p className="w-[328px] text-[12px] font-bold whitespace-nowrap">
        Choose direction and if needed start/end levels
      </p>
      <FormButton className="mr-[3px] w-[73px]">Contour</FormButton>
      <FormButton className="w-[64px] gap-1 pr-1">
        <X className="size-3" strokeWidth={4} />
        Close
      </FormButton>
    </div>
  </form>
);

const ResultGrid = () => (
  <>
    <div className="mt-[5px] flex items-end">
      <button className="h-[22px] w-[35px] border border-b-0 border-[#a0a0a0] bg-[#f0f0f0] text-[#222]">Grid</button>
      <button className="h-[21px] w-[39px] border border-b-0 border-l-0 border-[#a0a0a0] bg-[#dcdcdc] text-[#222]">
        Graph
      </button>
    </div>
    <div className="border-t-2 border-b-2 border-l border-[#a0a0a0]">
      <table className="w-full table-fixed border-collapse text-left text-[#808080]">
        <thead>
          <tr className="h-[22px] border-b border-[#a0a0a0]">
            <th className="w-[23px] border-r border-[#a0a0a0]" />
            <th className="w-[141px] border-r border-[#a0a0a0] px-1 font-normal">ID</th>
            <th className="w-[141px] border-r border-[#a0a0a0] px-[3px] font-normal">Level</th>
            <th className="w-[141px] border-r border-[#a0a0a0] px-1 text-right font-normal">Area</th>
            <th className="px-1 font-normal">Volume</th>
          </tr>
        </thead>
        <tbody>
          <tr className="h-[100px] border-b border-[#c6c6c6] bg-white">
            <td colSpan={5} />
          </tr>
        </tbody>
      </table>
      <div className="flex h-[37px] items-center justify-end gap-[2px] pr-[6px] text-right text-[#222]">
        <output className="h-6 w-[139px] border border-[#c6c6c6] bg-white px-1 leading-[22px]">Total:</output>
        <output className="h-6 w-[136px] border border-[#c6c6c6] bg-white px-1 leading-[22px]">Total:</output>
      </div>
    </div>
    <footer className="flex h-[21px] items-center pl-1 text-[12px] text-black">
      <span className="mr-auto">Done</span>
      <button className="mr-2 flex items-center gap-[6px]">
        Projection: Cape/Lo29
        <Caret className="text-black" />
      </button>
      <button className="mr-1 flex items-center gap-[6px]">
        Main
        <Caret className="text-black" />
      </button>
      <Icon className="mt-auto size-3">
        <path d="M12 0h3v3h-3zM12 6h3v3h-3zM12 12h3v3h-3zM6 6h3v3H6zM6 12h3v3H6zM0 12h3v3H0z" fill="#a0a0a0" />
      </Icon>
    </footer>
  </>
);

const ContourDialog = () => (
  <div
    role="dialog"
    aria-label="SurveyXL"
    className="absolute top-[51px] right-0 w-[593px] border border-[#444] bg-[#f0f0f0] shadow-[0_4px_14px_rgba(0,0,0,0.45)]"
  >
    <header className="flex h-[30px] items-center bg-white pl-2 font-['Open_Sans',sans-serif] text-[12px] text-black">
      <Icon>
        <path d="M0 1h3v14H0z" fill="#111" />
        <path d="M4 2l11 11H4z" fill="#ffe600" stroke="#222" strokeWidth=".8" />
        <path d="M6 8l3.500 3H6z" fill="#fff" stroke="#222" strokeWidth=".8" />
      </Icon>
      <h1 className="mr-auto ml-[5px]">SurveyXL v5.0.0.22</h1>
      <button aria-label="Minimise" className="flex w-[45px] justify-center">
        <Minus className="size-[14px]" strokeWidth={2} />
      </button>
      <button aria-label="Maximise" className="flex w-[45px] justify-center">
        <span className="size-[10px] border border-black" />
      </button>
      <button aria-label="Close window" className="flex w-[45px] justify-center">
        <X className="size-4" strokeWidth={1.5} />
      </button>
    </header>
    <nav className="flex h-[26px] bg-[#4f6d9d]">
      <TabBar tabs={DIALOG_TABS} active="Surfaces" />
    </nav>
    <div className="relative flex h-[100px] border-b border-[#c6c6c6] bg-[#dcdcdc] text-[#222]">
      <RibbonGroup title="Surfaces" className="w-[223px]">
        <div className="w-[140px] pl-1">
          <RibbonButton className="px-1" icon={<MeshIcon />}>Create from selection</RibbonButton>
          <RibbonButton className="px-1" icon={<StringsIcon />}>Create from strings</RibbonButton>
          <RibbonButton className="border border-[#a9bde0] bg-[#dbe7fa] px-[3px]" icon={<ContoursIcon />}>
            Contours
          </RibbonButton>
        </div>
        <div>
          <RibbonButton tall icon={<ProfilesIcon />}>Profiles</RibbonButton>
          <RibbonButton tall icon={<CutFillIcon />}>Cut and Fill</RibbonButton>
        </div>
      </RibbonGroup>
      <ChevronUp className="mt-auto mr-[2px] mb-[6px] ml-auto size-3 text-[#444]" strokeWidth={3} />
      <span className="pointer-events-none absolute top-[49px] -left-px h-[34px] w-[95px] border-[5px] border-[#ee1c25]" />
      <div
        role="tooltip"
        className="absolute top-[100px] left-1 z-10 flex h-[33px] w-[73px] items-center justify-center border border-[#999] bg-white pb-px font-['Open_Sans',sans-serif] font-bold text-[#333] shadow-[2px_2px_4px_rgba(0,0,0,0.5)]"
      >
        Contours
      </div>
    </div>

    <ContourForm />
    <ResultGrid />
  </div>
);

export default function App() {
  return (
    <div className="relative flex min-h-screen overflow-hidden border border-black bg-white font-[Roboto,'Open_Sans',sans-serif] text-[11px] leading-4">
      <MainWindow />
      <ContourDialog />
    </div>
  );
}
